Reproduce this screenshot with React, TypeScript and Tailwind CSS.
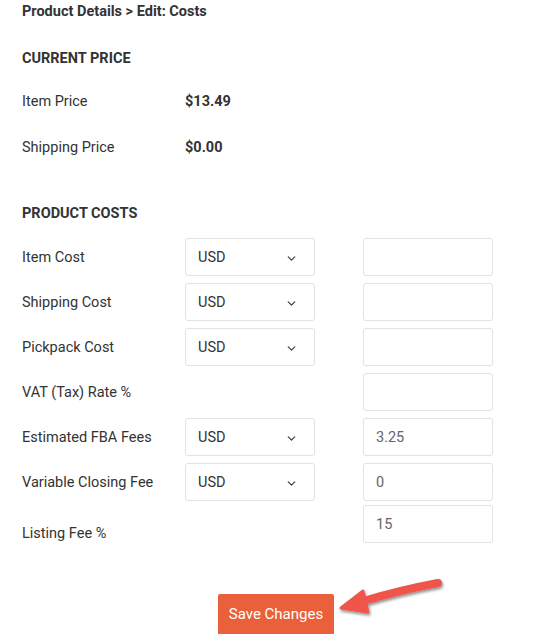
import { ChevronDown } from "lucide-react"

type Row = {
  label: string
  currency?: boolean
  value?: string
}

const costRows: Row[] = [
  { label: "Item Cost", currency: true, value: "" },
  { label: "Shipping Cost", currency: true, value: "" },
  { label: "Pickpack Cost", currency: true, value: "" },
  { label: "VAT (Tax) Rate %", value: "" },
  { label: "Estimated FBA Fees", currency: true, value: "3.25" },
  { label: "Variable Closing Fee", currency: true, value: "0" },
]

function CurrencySelect() {
  return (
    <div className="w-[130px] h-[38px] border border-[#e2e2e2] rounded-[3px] flex items-center justify-between pl-[12px] pr-[16px] pt-[2px] text-[#333]">
      <span>USD</span>
      <ChevronDown className="w-[13px] h-[13px] text-[#444]" strokeWidth={2.4} />
    </div>
  )
}

function ValueInput({ value }: { value?: string }) {
  return (
    <div className="w-[130px] h-[38px] border border-[#e2e2e2] rounded-[3px] flex items-center px-[12px] pt-[2px] text-[#666]">
      {value}
    </div>
  )
}

export default function App() {
  return (
    <div className="relative w-[552px] h-[634px] overflow-hidden bg-white text-[14.5px] leading-[20px] text-[#333] font-['Roboto',sans-serif] pl-[22px]">
      <div className="pt-[2px] font-bold">Product Details &gt; Edit: Costs</div>

      <div className="mt-[27px] font-bold">CURRENT PRICE</div>

      <div className="mt-[23px] flex">
        <div className="w-[163px]">Item Price</div>
        <div className="font-bold">$13.49</div>
      </div>
      <div className="mt-[26px] flex">
        <div className="w-[163px]">Shipping Price</div>
        <div className="font-bold">$0.00</div>
      </div>

      <div className="mt-[46px] font-bold">PRODUCT COSTS</div>

      <div className="mt-[14px] flex flex-col gap-[7px]">
        {costRows.map((row) => (
          <div key={row.label} className="flex items-center h-[38px]">
            <div className="w-[163px] pt-[2px]">{row.label}</div>
            <div className="w-[178px]">{row.currency && <CurrencySelect />}</div>
            <ValueInput value={row.value} />
          </div>
        ))}
      </div>

      <div className="mt-[4px] flex items-start h-[38px]">
        <div className="w-[341px] pt-[19px]">Listing Fee %</div>
        <ValueInput value="15" />
      </div>

      <div className="mt-[51px] flex">
        <button className="ml-[196px] w-[116px] h-[40px] bg-[#e9603b] text-white text-[15px] rounded-t-[2px]">
          Save Changes
        </button>
      </div>

      {/* annotation arrow */}
      <svg className="absolute left-[330px] top-[572px]" width="130" height="50" viewBox="0 0 130 50">
        <defs>
          <filter id="sh" x="-20%" y="-40%" width="140%" height="180%">
            <feDropShadow dx="1" dy="2" stdDeviation="1.5" floodColor="#000" floodOpacity="0.45" />
          </filter>
        </defs>
        <g filter="url(#sh)" fill="#f0554c" stroke="#f0554c" strokeLinecap="round" strokeLinejoin="round">
          <path d="M108 11 Q70 18 30 30" strokeWidth="8" fill="none" />
          <path d="M11 36 L33 19 L38 40 Z" strokeWidth="3" />
        </g>
      </svg>
    </div>
  )
}
